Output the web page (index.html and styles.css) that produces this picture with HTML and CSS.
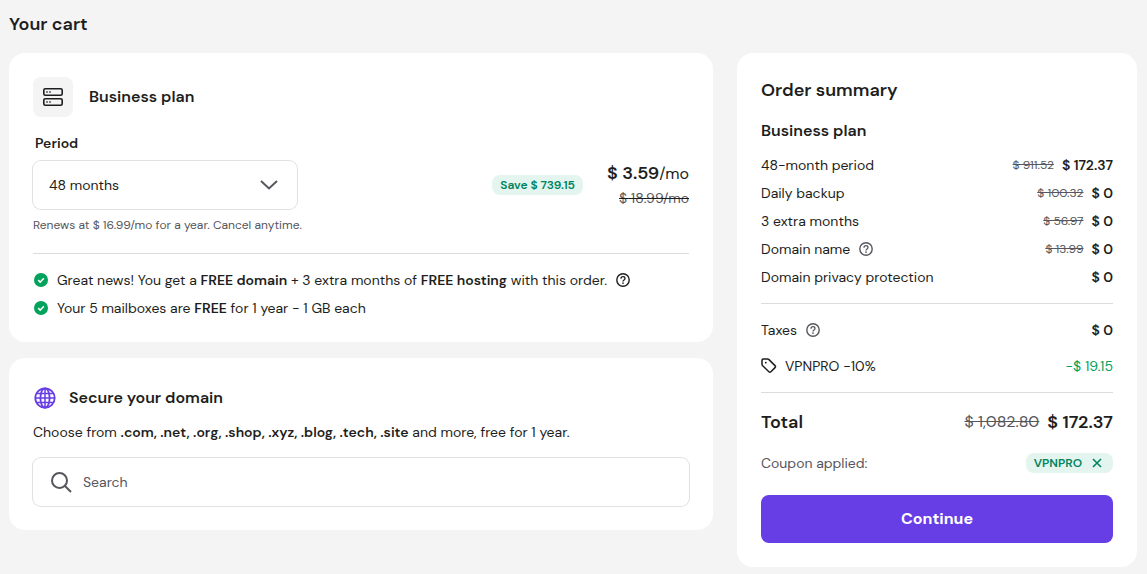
FILE: index.html
```html
<!DOCTYPE html>
<html lang="en">
<head>
<meta charset="utf-8">
<meta name="viewport" content="width=device-width, initial-scale=1">
<title>Your cart</title>
<link rel="stylesheet" href="styles.css">
</head>
<body>
<svg class="sprite" aria-hidden="true">
  <symbol id="help" viewBox="0 0 14 14">
    <circle cx="7" cy="7" r="6.2" fill="none" stroke="currentColor" stroke-width="1.4"/>
    <path d="M5 5.7C5 4.500 5.900 3.700 7 3.700s2 .8 2 1.800c0 1.300-2 1.500-2 2.900" fill="none" stroke="currentColor" stroke-width="1.300"/>
    <circle cx="7" cy="10.100" r=".85" fill="currentColor"/>
  </symbol>
  <symbol id="check" viewBox="0 0 14 14">
    <circle cx="7" cy="7" r="7" fill="currentColor"/>
    <path d="M4.200 7.100l2 2 3.700-3.800" fill="none" stroke="#fff" stroke-width="1.500"/>
  </symbol>
</svg>
<main class="page">
  <h1 class="page-title">Your cart</h1>
  <div class="columns">
    <div class="items">
      <section class="card plan-card">
        <header class="plan-head">
          <span class="plan-icon">
            <svg width="20" height="18" viewBox="0 0 20 18" fill="none" stroke="#1d1e20" stroke-width="1.600">
              <rect x=".8" y=".8" width="18.400" height="6.400" rx="1.500"/>
              <rect x=".8" y="10.800" width="18.400" height="6.400" rx="1.500"/>
              <path d="M3.300 4h1.400M6.300 4h1.400M3.300 14h1.400M6.300 14h1.400"/>
            </svg>
          </span>
          <h2 class="card-title">Business plan</h2>
        </header>
        <label class="period-label" for="period">Period</label>
        <div class="period-row">
          <div class="field period-field">
            <select id="period" class="period-select"><option>48 months</option></select>
            <svg class="chevron" width="18" height="10" viewBox="0 0 18 10" fill="none" stroke="#56565c" stroke-width="2"><path d="M1 1l8 7.500L17 1"/></svg>
          </div>
          <div class="price-group">
            <span class="tag">Save $ 739.15</span>
            <div class="prices">
              <div class="price"><strong>$ 3.59</strong>/mo</div>
              <s class="price-old">$ 18.99/mo</s>
            </div>
          </div>
        </div>
        <p class="renews">Renews at $ 16.99/mo for a year. Cancel anytime.</p>
        <hr class="rule">
        <ul class="perks">
          <li class="perk"><svg class="check"><use href="#check"/></svg><span>Great news! You get a <b>FREE domain</b> + 3 extra months of <b>FREE hosting</b> with this order.</span><svg class="help help-dark"><use href="#help"/></svg></li>
          <li class="perk"><svg class="check"><use href="#check"/></svg><span>Your 5 mailboxes are <b>FREE</b> for 1 year - 1 GB each</span></li>
        </ul>
      </section>
      <section class="card domain-card">
        <header class="domain-head">
          <svg width="24" height="24" viewBox="0 0 24 24" fill="none" stroke="#673de6" stroke-width="1.800">
            <circle cx="12" cy="12" r="9.700"/><ellipse cx="12" cy="12" rx="4.600" ry="9.700"/>
            <path d="M12 2v20M2.500 12h19M4 7.500h16M4 16.500h16" stroke-width="1.500"/>
          </svg>
          <h2 class="card-title">Secure your domain</h2>
        </header>
        <p class="domain-text" id="domain-text">Choose from <b>.com, .net, .org, .shop, .xyz, .blog, .tech, .site</b> and more, free for 1 year.</p>
        <div class="field search">
          <svg width="22" height="22" viewBox="0 0 22 22" fill="none" stroke="#56565c" stroke-width="2"><circle cx="9.500" cy="9.500" r="7.500"/><path d="M15 15l6 6"/></svg>
          <input class="search-input" type="text" placeholder="Search" aria-labelledby="domain-text">
        </div>
      </section>
    </div>
    <aside class="card">
      <h2 class="summary-title">Order summary</h2>
      <h3 class="card-title">Business plan</h3>
      <div class="lines">
        <div class="line"><span>48-month period</span><span class="amount"><s>$ 911.52</s><b>$ 172.37</b></span></div>
        <div class="line"><span>Daily backup</span><span class="amount"><s>$ 100.32</s><b>$ 0</b></span></div>
        <div class="line"><span>3 extra months</span><span class="amount"><s>$ 56.97</s><b>$ 0</b></span></div>
        <div class="line"><span class="with-icon">Domain name<svg class="help"><use href="#help"/></svg></span><span class="amount"><s>$ 13.99</s><b>$ 0</b></span></div>
        <div class="line"><span>Domain privacy protection</span><b>$ 0</b></div>
      </div>
      <hr class="rule">
      <div class="extras">
        <div class="line"><span class="with-icon">Taxes<svg class="help"><use href="#help"/></svg></span><b>$ 0</b></div>
        <div class="line"><span class="with-tag"><svg width="16" height="16" viewBox="0 0 16 16" fill="none" stroke="#1d1e20" stroke-width="1.500" stroke-linejoin="round"><path d="M1 2.200Q1 1 2.200 1H6.500Q7.400 1 8 1.600L14 7.600Q15 8.600 14 9.600L9.900 13.700Q8.900 14.700 7.900 13.700L1.700 7.800Q1 7.100 1 6.200Z"/><circle cx="4.800" cy="4.700" r=".9" fill="#1d1e20" stroke="none"/></svg>VPNPRO -10%</span><span class="discount">-$ 19.15</span></div>
      </div>
      <hr class="rule">
      <div class="total"><strong>Total</strong><span class="amount"><s>$ 1,082.80</s><strong>$ 172.37</strong></span></div>
      <div class="coupon"><span>Coupon applied:</span>
        <span class="tag coupon-tag">VPNPRO<button class="remove" type="button" aria-label="Remove coupon"><svg width="10" height="10" viewBox="0 0 10 10" stroke="#008361" stroke-width="1.600"><path d="M1 1l8 8M9 1L1 9"/></svg></button></span>
      </div>
      <button class="continue" type="button">Continue</button>
    </aside>
  </div>
</main>
</body>
</html>
```
FILE: styles.css
```css
* { box-sizing: border-box; }
body {
  margin: 0;
  background: #f4f4f4;
  color: #1d1e20;
  font: 14px/24px "DM Sans", Inter, "Liberation Sans", sans-serif;
}
h1, h2, h3, p, ul { margin: 0; padding: 0; }
b, strong { font-weight: 600; }
svg { display: block; flex: none; }
.sprite { position: absolute; width: 0; height: 0; }
.page { padding: 12px 10px 7px 9px; }
.page-title { font-size: 18px; line-height: 24px; font-weight: 600; margin-bottom: 17px; }
.columns { display: grid; grid-template-columns: minmax(0, 1fr) 400px; gap: 24px; align-items: start; }
.items { display: grid; gap: 16px; }
.card { background: #fff; border-radius: 16px; padding: 24px; }
.plan-card { padding-bottom: 22px; }
.card-title { font-size: 16px; line-height: 24px; font-weight: 600; }
.plan-head { display: flex; align-items: center; gap: 16px; }
.plan-icon { display: grid; place-items: center; width: 40px; height: 40px; border-radius: 8px; background: #f4f4f4; }
.period-label { display: block; font-weight: 600; padding: 14px 2px 4px; }
.field { height: 48px; border-radius: 8px; box-shadow: 0 0 0 1px #e1e1e4; }
.period-row { display: flex; align-items: center; justify-content: space-between; }
.period-field { display: grid; width: 264px; align-items: center; }
.period-select, .chevron { grid-area: 1 / 1; }
.period-select { appearance: none; width: 100%; height: 48px; border: 0; border-radius: 8px; padding: 0 48px 0 16px; background: none; color: inherit; font: inherit; }
.chevron { justify-self: end; margin-right: 19px; pointer-events: none; }
.price-group { display: flex; align-items: center; gap: 24px; }
.tag { background: #e3f5ee; color: #008361; border-radius: 8px; padding: 0 8px; font-size: 12px; line-height: 20px; font-weight: 600; }
.prices { display: grid; padding-top: 2px; text-align: right; }
.price { font-size: 16px; }
.price strong { font-size: 18px; }
.price-old { color: #56565c; text-decoration-color: #1d1e20; }
.renews { font-size: 12px; line-height: 20px; color: #56565c; padding: 5px 0 18px; }
.rule { border: 0; height: 1px; margin: 0; background: #dadce0; }
.perks { list-style: none; display: grid; gap: 4px; padding-top: 14px; }
.perk { display: flex; align-items: center; gap: 9px; padding-left: 1px; }
.check { width: 14px; height: 14px; color: #00a25c; }
.help { width: 14px; height: 14px; color: #56565c; }
.help-dark { color: #1d1e20; }
.domain-head { display: flex; align-items: center; gap: 12px; padding-top: 4px; }
.domain-text { padding: 10px 0 14px; }
.search { display: flex; align-items: center; gap: 11px; padding: 0 16px 0 17px; }
.search-input { flex: 1; min-width: 0; height: 48px; padding: 0; border: 0; background: none; font: inherit; color: inherit; }
.search-input::placeholder { color: #56565c; opacity: 1; }
.summary-title { font-size: 18px; line-height: 26px; font-weight: 600; margin-bottom: 16px; }
.lines { display: grid; gap: 4px; padding: 10px 0 14px; }
.line, .total, .coupon { display: flex; align-items: center; justify-content: space-between; }
.amount { display: flex; align-items: center; gap: 8px; }
.amount s { font-size: 12px; color: #56565c; }
.with-icon, .with-tag { display: flex; align-items: center; gap: 9px; }
.with-tag { gap: 8px; }
.extras { display: grid; gap: 12px; padding: 14px 0; }
.discount { color: #00a25c; }
.total { font-size: 18px; padding: 17px 0; }
.total s { font-size: 16px; }
.coupon { color: #56565c; }
.coupon-tag { display: flex; align-items: center; gap: 7px; }
.remove { display: grid; place-items: center; width: 16px; height: 20px; padding: 0; border: 0; background: none; cursor: pointer; }
.continue { display: block; width: 100%; height: 48px; margin-top: 20px; border: 0; border-radius: 8px; background: #673de6; color: #fff; font: 700 16px/24px "DM Sans", Inter, "Liberation Sans", sans-serif; cursor: pointer; }
```
